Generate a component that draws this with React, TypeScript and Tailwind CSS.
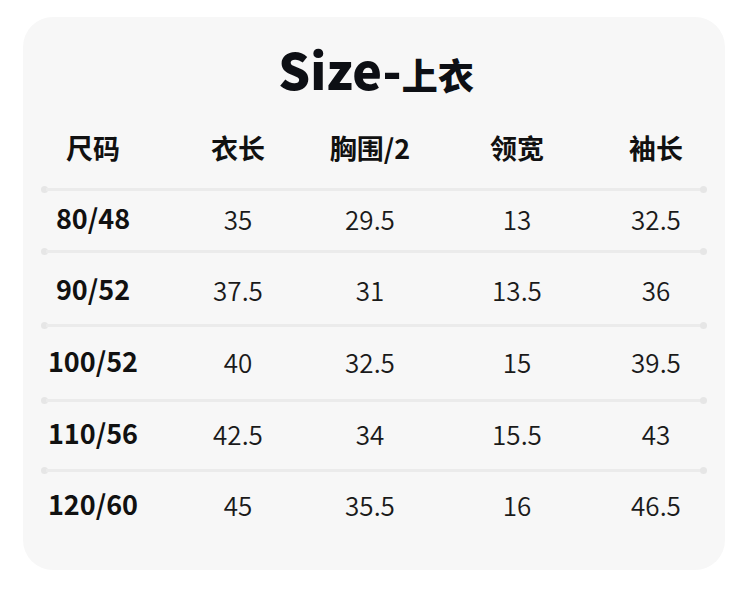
const headers = ["尺码", "衣长", "胸围/2", "领宽", "袖长"];

const rows = [
  { size: "80/48", cells: ["35", "29.5", "13", "32.5"], h: "h-[59px] pb-[5px]" },
  { size: "90/52", cells: ["37.5", "31", "13.5", "36"], h: "h-[71px] pt-[2px]" },
  { size: "100/52", cells: ["40", "32.5", "15", "39.5"], h: "h-[72px] pb-[4px]" },
  { size: "110/56", cells: ["42.5", "34", "15.5", "43"], h: "h-[67px] pb-[5px]" },
  { size: "120/60", cells: ["45", "35.5", "16", "46.5"], h: "h-[64px]" },
];

const cols = "grid grid-cols-[120px_170px_94px_200px_78px] pl-[10px]";

function Divider() {
  return (
    <div className="mx-[18px] flex items-center h-[3px]">
      <div className="w-[7px] h-[7px] rounded-full bg-[#e6e6e6] shrink-0" />
      <div className="flex-1 h-[3px] bg-[#ebebeb] -mx-[2px]" />
      <div className="w-[7px] h-[7px] rounded-full bg-[#e6e6e6] shrink-0" />
    </div>
  );
}

export default function App() {
  return (
    <div
      className="w-[750px] h-[590px] bg-white pt-[17px] pl-[23px]"
      style={{ fontFamily: '"Noto Sans CJK SC", "Noto Sans", sans-serif' }}
    >
      <div className="w-[702px] h-[553px] bg-[#f7f7f7] rounded-[30px] pt-[25px]">
        <div className="h-[60px] flex items-baseline justify-center font-black text-[#0d0f14] -mt-[4px] mb-[4px] pl-[4px]">
          <span className="text-[50px] leading-[60px]">Size-</span>
          <span className="text-[36px] leading-[60px]">上衣</span>
        </div>

        <div className={`${cols} h-[86px] pt-[6px] items-center text-[27px] font-bold text-[#111]`}>
          {headers.map((t) => (
            <div key={t} className="text-center">{t}</div>
          ))}
        </div>

        {rows.map((r) => (
          <div key={r.size}>
            <Divider />
            <div className={`${cols} ${r.h} items-center text-[26px] font-[350] text-[#1a1a1a]`}>
              <div className="text-center font-bold text-[27px] text-[#111]">{r.size}</div>
              {r.cells.map((c, i) => (
                <div key={i} className="text-center">{c}</div>
              ))}
            </div>
          </div>
        ))}
      </div>
    </div>
  );
}
